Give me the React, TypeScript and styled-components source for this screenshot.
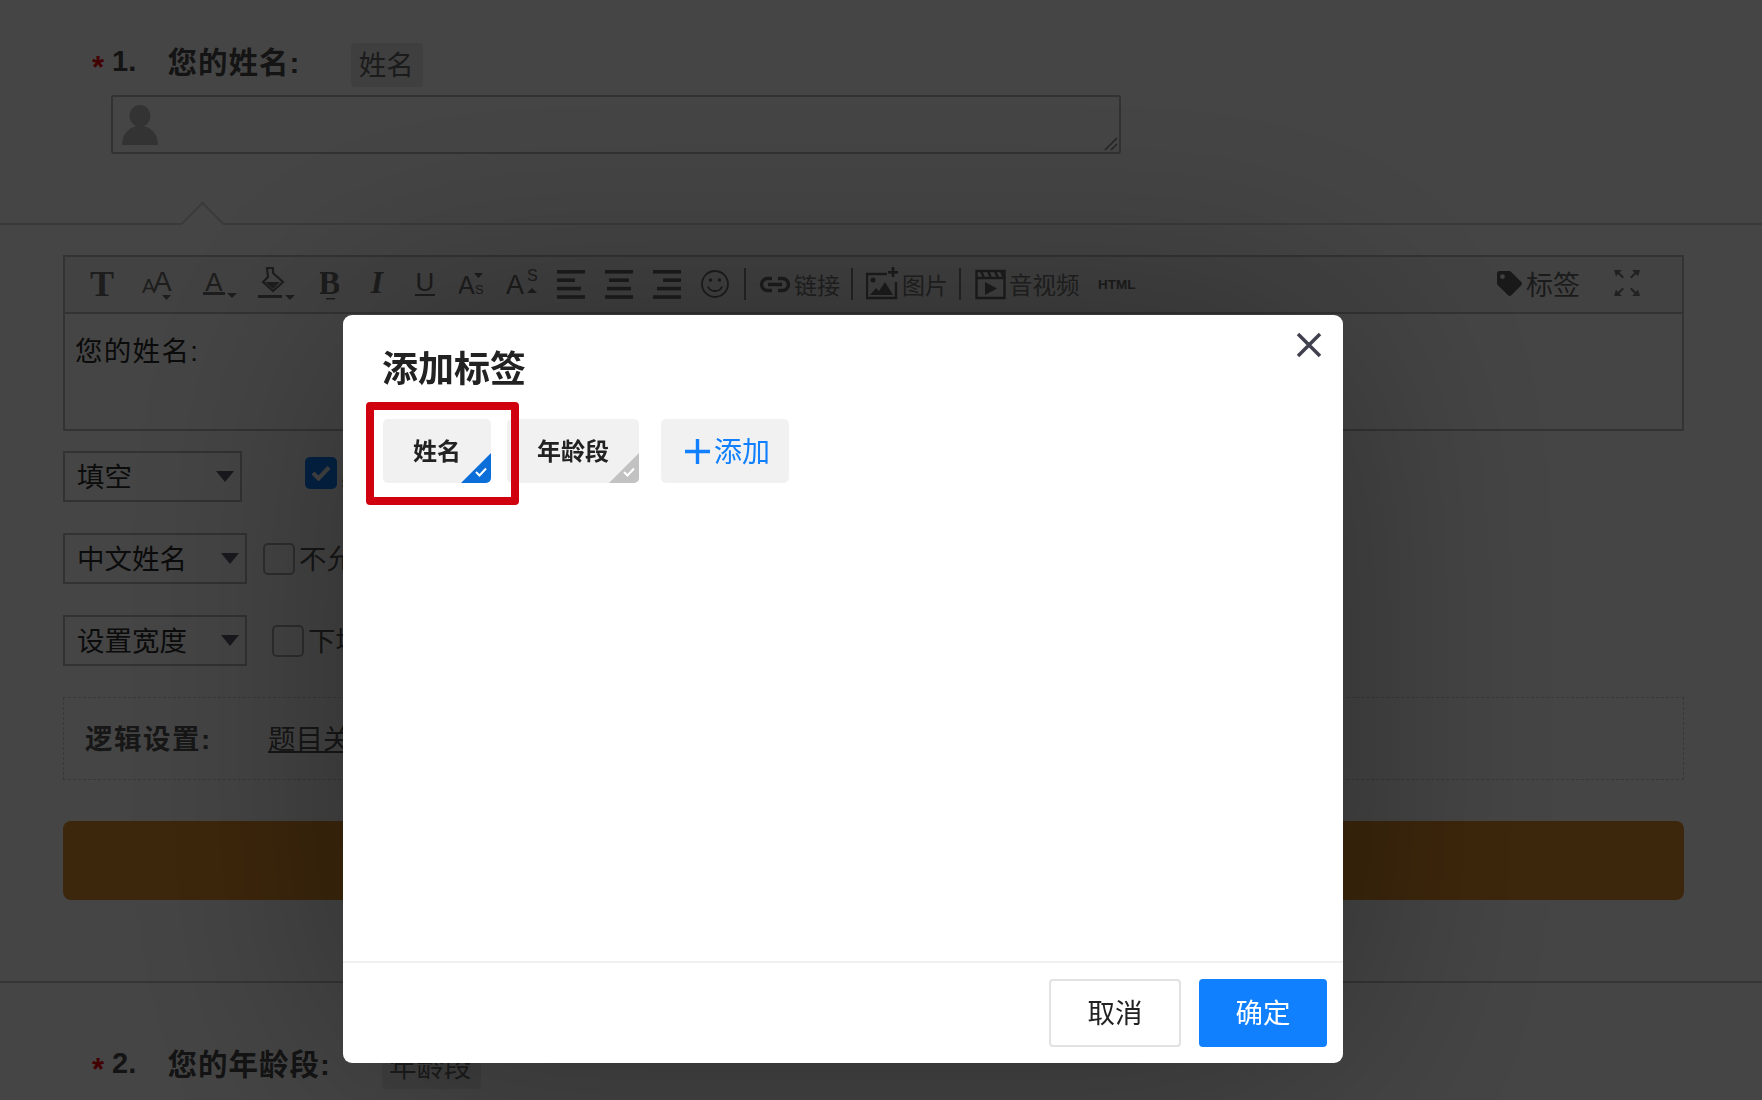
import React from "react";
import styled, { createGlobalStyle } from "styled-components";
import { FaTag } from "react-icons/fa";

const GlobalStyle = createGlobalStyle`
  html, body {
    margin: 0;
    padding: 0;
    background: #fff;
  }
  body {
    font-family: "Liberation Sans", "Noto Sans CJK SC", sans-serif;
    color: #3a3a3a;
  }
`;

const Page = styled.div`
  width: 1762px;
  height: 1100px;
  overflow: hidden;
  background: #fff;
`;

const QuestionHead = styled.div<{ $top: number }>`
  display: flex;
  align-items: center;
  height: 44px;
  padding-top: ${(p) => p.$top}px;
  padding-left: 92px;
`;

const Star = styled.span`
  width: 20px;
  margin-top: 4px;
  font-size: 31px;
  font-weight: 700;
  line-height: 1;
  color: #f5000a;
`;

const QuestionNo = styled.span`
  width: 55.5px;
  padding-bottom: 7px;
  font-size: 29px;
  font-weight: 700;
  color: #4a4a4a;
`;

const QuestionTitle = styled.span`
  padding-bottom: 10px;
  font-size: 29.5px;
  font-weight: 700;
  letter-spacing: 1px;
  color: #4a4a4a;
`;

const Chip = styled.span<{ $ml: number; $w: number }>`
  display: flex;
  align-items: center;
  justify-content: center;
  box-sizing: border-box;
  width: ${(p) => p.$w}px;
  height: 44px;
  margin-left: ${(p) => p.$ml}px;
  padding: 0 2px 5px 0;
  border-radius: 4px;
  background: #e8e8e8;
  font-size: 27.5px;
  color: #666;
`;

const NameField = styled.div`
  box-sizing: border-box;
  width: 1010px;
  height: 59px;
  margin: 8px 0 0 111px;
  padding: 8px 0 0 9px;
  border: 2px solid #b8b8b8;
  border-radius: 3px;
  position: relative;
`;

const ResizeGrip = styled.svg`
  position: absolute;
  right: 1px;
  bottom: 1px;
`;

const EditSection = styled.section`
  position: relative;
  margin-top: 69px;
  height: 726px;
  padding-top: 30px;
  border-top: 2px solid #d6d6d6;
  border-bottom: 2px solid #c4c4c4;
  box-sizing: content-box;

  &::before {
    content: "";
    position: absolute;
    left: 187px;
    top: -17px;
    width: 31px;
    height: 31px;
    background: #fff;
    border-top: 2px solid #d6d6d6;
    border-left: 2px solid #d6d6d6;
    box-sizing: border-box;
    transform: rotate(45deg);
  }
`;

const Editor = styled.div`
  margin: 0 78px 0 63px;
  border: 2px solid #bcbcbc;
`;

const Toolbar = styled.div`
  display: flex;
  align-items: center;
  box-sizing: border-box;
  height: 57px;
  padding: 0 41px 2px 24px;
  border-bottom: 2px solid #bcbcbc;
  background: #f4f4f4;
`;

const ToolSvg = styled.svg<{ $ml: number }>`
  flex: none;
  margin-left: ${(p) => p.$ml}px;
  fill: #6c6c6c;
  stroke: none;

  text {
    font-family: "Liberation Sans", sans-serif;
  }
  .serif {
    font-family: "Liberation Serif", serif;
    font-weight: 700;
  }
`;

const ToolSep = styled.span<{ $ml: number }>`
  flex: none;
  width: 2px;
  height: 32px;
  margin-left: ${(p) => p.$ml}px;
  background: #8a8a8a;
`;

const ToolLabel = styled.span<{ $ml: number; $size: number }>`
  flex: none;
  margin-left: ${(p) => p.$ml}px;
  font-size: ${(p) => p.$size}px;
  color: #7c7c7c;
`;

const TagTool = styled.span`
  display: flex;
  align-items: center;
  margin-left: auto;
  font-size: 27px;
  color: #666;

  svg {
    margin-right: 4px;
    fill: #5e5e5e;
  }
`;

const EditorBody = styled.div`
  height: 115px;
  box-sizing: border-box;
  padding: 21px 0 0 10px;
  font-size: 27.5px;
  line-height: 34px;
  letter-spacing: 1.3px;
  color: #2a2a2a;
`;

const FormRow = styled.div<{ $mt: number }>`
  display: flex;
  align-items: center;
  margin: ${(p) => p.$mt}px 0 0 63px;
`;

const SelectBox = styled.div<{ $w: number }>`
  box-sizing: border-box;
  display: flex;
  align-items: center;
  justify-content: space-between;
  width: ${(p) => p.$w}px;
  height: 51px;
  padding: 0 6px 0 12px;
  border: 2px solid #b8b8b8;
  font-size: 27.5px;
  color: #2c2c2c;

  span {
    margin-bottom: 4px;
  }
`;

const CheckBox = styled.span<{ $ml: number; $checked?: boolean }>`
  flex: none;
  box-sizing: border-box;
  display: flex;
  align-items: center;
  justify-content: center;
  width: 32px;
  height: 32px;
  margin-left: ${(p) => p.$ml}px;
  margin-top: ${(p) => (p.$checked ? -7 : 0)}px;
  border: ${(p) => (p.$checked ? "none" : "2px solid #aaa")};
  border-radius: 5px;
  background: ${(p) => (p.$checked ? "#1080ff" : "#fff")};
`;

const CheckText = styled.span`
  margin: 0 0 4px 4px;
  font-size: 27.5px;
  color: #555;
  white-space: nowrap;
`;

const LogicBox = styled.div`
  box-sizing: border-box;
  display: flex;
  align-items: center;
  height: 83px;
  margin: 31px 78px 0 63px;
  padding: 0 0 4px 21px;
  border: 1.5px dashed #d0d0d0;
  font-size: 27.5px;
  color: #555;
`;

const LogicLabel = styled.span`
  width: 183px;
  font-weight: 700;
  letter-spacing: 1.5px;
`;

const LogicLink = styled.span`
  text-decoration: underline;
`;

const SaveBar = styled.div`
  height: 79px;
  margin: 41px 78px 0 63px;
  border-radius: 8px;
  background: #e2902d;
`;

const Backdrop = styled.div`
  position: fixed;
  inset: 0;
  box-sizing: border-box;
  padding: 315px 0 0 343px;
  background: rgba(0, 0, 0, 0.73);
`;

const Modal = styled.div`
  position: relative;
  display: flex;
  flex-direction: column;
  width: 1000px;
  height: 748px;
  border-radius: 9px;
  background: #fff;
  box-shadow: 0 0 300px rgba(0, 0, 0, 0.36);
`;

const CloseBtn = styled.svg`
  position: absolute;
  top: 17px;
  right: 21px;
`;

const ModalTitle = styled.h2`
  margin: 30px 0 0 39px;
  font-size: 36px;
  font-weight: 700;
  line-height: 50px;
  color: #222;
`;

const TagList = styled.div`
  flex: 1;
  display: flex;
  align-items: flex-start;
  margin: 24px 0 0 40px;
`;

const TagItem = styled.div<{ $w: number; $ml?: number }>`
  position: relative;
  overflow: hidden;
  display: flex;
  align-items: center;
  justify-content: center;
  box-sizing: border-box;
  width: ${(p) => p.$w}px;
  height: 64px;
  margin-left: ${(p) => p.$ml || 0}px;
  padding-bottom: 4px;
  border-radius: 5px;
  background: #f1f1f1;
  font-size: 24px;
  font-weight: 700;
  color: #222;
`;

const TagCorner = styled.span<{ $active?: boolean }>`
  position: absolute;
  right: 0;
  bottom: 0;
  display: flex;
  align-items: flex-end;
  justify-content: flex-end;
  width: 30px;
  height: 30px;
  padding: 0 4px 6px 0;
  box-sizing: border-box;
  clip-path: polygon(100% 0, 100% 100%, 0 100%);
  background: ${(p) => (p.$active ? "#0c6ed8" : "#c2c2c2")};
`;

const AddTag = styled(TagItem)`
  gap: 4px;
  padding: 0 0 0 5px;
  font-size: 28px;
  font-weight: 400;
  color: #1080ff;

  svg {
    margin-top: 1px;
  }
  span {
    margin-bottom: 2px;
  }
`;

const HighlightBox = styled.div`
  position: absolute;
  left: 23px;
  top: 87px;
  box-sizing: border-box;
  width: 153px;
  height: 103px;
  border: 8px solid #d1000f;
  border-radius: 4px;
`;

const ModalFooter = styled.div`
  display: flex;
  justify-content: flex-end;
  gap: 18px;
  height: 102px;
  box-sizing: border-box;
  padding: 16px 16px 0 0;
  border-top: 2px solid #f0f0f0;
`;

const FooterBtn = styled.button<{ $primary?: boolean }>`
  box-sizing: border-box;
  width: ${(p) => (p.$primary ? 128 : 132)}px;
  height: 68px;
  padding: 0 0 5px;
  border: ${(p) => (p.$primary ? "none" : "2px solid #e2e2e2")};
  border-radius: 4px;
  background: ${(p) => (p.$primary ? "#1080ff" : "#fff")};
  font-family: inherit;
  font-size: 27.5px;
  color: ${(p) => (p.$primary ? "#fff" : "#222")};
`;

const Tool: React.FC<{ w: number; ml: number; children: React.ReactNode }> = ({ w, ml, children }) => (
  <ToolSvg $ml={ml} width={w} height={34} viewBox={`0 0 ${w} 34`}>
    {children}
  </ToolSvg>
);

const Bars: React.FC<{ widths: number[]; align: "l" | "c" | "r" }> = ({ widths, align }) => (
  <>
    {widths.map((b, i) => (
      <rect
        key={i}
        x={align === "l" ? 0 : align === "c" ? (28 - b) / 2 : 28 - b}
        y={3 + i * 8.4}
        width={b}
        height={3.6}
      />
    ))}
  </>
);

const SelectArrow = () => (
  <svg width="18" height="11" viewBox="0 0 18 11">
    <path d="M0 0h18L9 11z" fill="#5a5a6e" />
  </svg>
);

const CheckMark = () => (
  <svg width="20" height="16" viewBox="0 0 20 16">
    <path d="M2 8l5.5 5.5L18 2.5" fill="none" stroke="#fff" strokeWidth="4" />
  </svg>
);

const TagCheck = () => (
  <svg width="12" height="10" viewBox="0 0 12 10">
    <path d="M1 5l3.5 3.5L11 1.5" fill="none" stroke="#fff" strokeWidth="2" />
  </svg>
);

const EditorToolbar = () => (
  <Toolbar>
    <Tool w={26} ml={0}>
      <text className="serif" x="13" y="29" fontSize="36" textAnchor="middle">T</text>
    </Tool>
    <Tool w={32} ml={27}>
      <text x="0" y="26" fontSize="20">A</text>
      <text x="11" y="24" fontSize="28">A</text>
      <path d="M20 28h9l-4.500 5z" />
    </Tool>
    <Tool w={34} ml={29}>
      <text x="11" y="24" fontSize="26" textAnchor="middle">A</text>
      <rect x="0" y="25" width="22" height="3" />
      <path d="M24 26h10l-5 5z" />
    </Tool>
    <Tool w={37} ml={21}>
      <path d="M9 1h6v5l10 9-10 9-10-9 5-5z" fill="none" stroke="#6c6c6c" strokeWidth="2.200" />
      <path d="M7 15h15l-7 7z" />
      <rect x="0" y="28" width="24" height="3" />
      <path d="M27 28h10l-5 5z" />
    </Tool>
    <Tool w={19} ml={25}>
      <text className="serif" x="9.500" y="27" fontSize="33" textAnchor="middle">B</text>
      <rect x="6" y="31" width="9" height="1.500" />
    </Tool>
    <Tool w={20} ml={28}>
      <text className="serif" x="10" y="26" fontSize="32" fontStyle="italic" textAnchor="middle">I</text>
    </Tool>
    <Tool w={20} ml={28}>
      <text x="10" y="24" fontSize="26" textAnchor="middle">U</text>
      <rect x="0" y="27" width="20" height="2" />
    </Tool>
    <Tool w={24} ml={24}>
      <text x="-1" y="27" fontSize="25">A</text>
      <text x="16" y="27" fontSize="13">S</text>
      <path d="M15 6h9l-4.500 5z" />
    </Tool>
    <Tool w={32} ml={23}>
      <text x="0" y="27" fontSize="27">A</text>
      <text x="21" y="14" fontSize="16">S</text>
      <path d="M21 26h10l-5-5z" />
    </Tool>
    <Tool w={28} ml={19}>
      <Bars widths={[28, 18, 24, 28]} align="l" />
    </Tool>
    <Tool w={28} ml={20}>
      <Bars widths={[28, 20, 24, 28]} align="c" />
    </Tool>
    <Tool w={28} ml={20}>
      <Bars widths={[28, 18, 24, 28]} align="r" />
    </Tool>
    <Tool w={28} ml={20}>
      <circle cx="14" cy="17" r="13" fill="none" stroke="#6c6c6c" strokeWidth="1.800" />
      <circle cx="9.500" cy="13" r="1.800" />
      <circle cx="18.500" cy="13" r="1.800" />
      <path d="M7 19.500c2 6 12 6 14 0" fill="none" stroke="#6c6c6c" strokeWidth="1.800" />
    </Tool>
    <ToolSep $ml={15} />
    <Tool w={32} ml={13}>
      <path d="M13 11.500H8.500a6 6 0 0 0 0 12H13M19 11.500h4.500a6 6 0 0 1 0 12H19M9 17.500h14" fill="none" stroke="#6c6c6c" strokeWidth="3.400" />
    </Tool>
    <ToolLabel $ml={3} $size={23}>链接</ToolLabel>
    <ToolSep $ml={11} />
    <Tool w={32} ml={13}>
      <path d="M21 7H1v24h29V15" fill="none" stroke="#6c6c6c" strokeWidth="2.400" />
      <rect x="22" y="4" width="10" height="2.600" />
      <rect x="25.700" y="0" width="2.600" height="10" />
      <circle cx="7" cy="13" r="2.500" />
      <path d="M4 28l6-7 3 3 6-9 8 13z" />
    </Tool>
    <ToolLabel $ml={4} $size={23}>图片</ToolLabel>
    <ToolSep $ml={11} />
    <Tool w={31} ml={14}>
      <path d="M1.500 4h28v27h-28zM1.500 11h28" fill="none" stroke="#6c6c6c" strokeWidth="2.400" />
      <path d="M6 4l3 7M13 4l3 7M20 4l3 7M26 4l2.500 6" fill="none" stroke="#6c6c6c" strokeWidth="2.400" />
      <path d="M10 15l12 6.500L10 28z" />
    </Tool>
    <ToolLabel $ml={3} $size={23.5}>音视频</ToolLabel>
    <Tool w={38} ml={18}>
      <text x="0" y="22" fontSize="13.500" fontWeight="700">HTML</text>
    </Tool>
    <TagTool>
      <FaTag size={25} />
      标签
    </TagTool>
    <Tool w={28} ml={33}>
      <path d="M1 3h8L6.500 5.500l4.500 4.500-1.500 1.500L5 7 3 9.500zM27 3h-8l2.500 2.500L17 10l1.500 1.500L23 7l2 2.500zM1 29h8l-2.500-2.500L11 22l-1.500-1.500L5 25l-2-2.500zM27 29h-8l2.500-2.500L17 22l1.500-1.500L23 25l2-2.500z" fill="#7c7c7c" />
    </Tool>
  </Toolbar>
);

const App: React.FC = () => (
  <Page>
    <GlobalStyle />
    <QuestionHead $top={43}>
      <Star>*</Star>
      <QuestionNo>1.</QuestionNo>
      <QuestionTitle>您的姓名:</QuestionTitle>
      <Chip $ml={51} $w={72}>姓名</Chip>
    </QuestionHead>
    <NameField>
      <svg width="36" height="40" viewBox="0 0 36 40">
        <ellipse cx="18" cy="11" rx="10.500" ry="11" fill="#bcbcbc" />
        <path d="M0 40c0-12 8-19 18-19s18 7 18 19z" fill="#bcbcbc" />
      </svg>
      <ResizeGrip width="14" height="14" viewBox="0 0 14 14">
        <path d="M1 13L13 1M7 13l6-6" stroke="#8a8a8a" strokeWidth="1.600" />
      </ResizeGrip>
    </NameField>

    <EditSection>
      <Editor>
        <EditorToolbar />
        <EditorBody>您的姓名:</EditorBody>
      </Editor>
      <FormRow $mt={20}>
        <SelectBox $w={179}>
          <span>填空</span>
          <SelectArrow />
        </SelectBox>
        <CheckBox $ml={63} $checked>
          <CheckMark />
        </CheckBox>
        <CheckText>必填</CheckText>
      </FormRow>
      <FormRow $mt={31}>
        <SelectBox $w={184}>
          <span>中文姓名</span>
          <SelectArrow />
        </SelectBox>
        <CheckBox $ml={16} />
        <CheckText>不允许重复</CheckText>
      </FormRow>
      <FormRow $mt={31}>
        <SelectBox $w={184}>
          <span>设置宽度</span>
          <SelectArrow />
        </SelectBox>
        <CheckBox $ml={25} />
        <CheckText>下填写</CheckText>
      </FormRow>
      <LogicBox>
        <LogicLabel>逻辑设置:</LogicLabel>
        <LogicLink>题目关联</LogicLink>
      </LogicBox>
      <SaveBar />
    </EditSection>

    <QuestionHead $top={62}>
      <Star>*</Star>
      <QuestionNo>2.</QuestionNo>
      <QuestionTitle>您的年龄段:</QuestionTitle>
      <Chip $ml={51} $w={99}>年龄段</Chip>
    </QuestionHead>

    <Backdrop>
      <Modal>
        <CloseBtn width="26" height="26" viewBox="0 0 26 26">
          <path d="M2 2l22 22M24 2L2 24" stroke="#40404e" strokeWidth="3.500" />
        </CloseBtn>
        <ModalTitle>添加标签</ModalTitle>
        <TagList>
          <TagItem $w={108}>
            姓名
            <TagCorner $active>
              <TagCheck />
            </TagCorner>
          </TagItem>
          <TagItem $w={132} $ml={16}>
            年龄段
            <TagCorner>
              <TagCheck />
            </TagCorner>
          </TagItem>
          <AddTag $w={128} $ml={22}>
            <svg width="25" height="25" viewBox="0 0 25 25">
              <path d="M0 12.500h25M12.500 0v25" stroke="#1080ff" strokeWidth="3.400" />
            </svg>
            <span>添加</span>
          </AddTag>
        </TagList>
        <HighlightBox />
        <ModalFooter>
          <FooterBtn>取消</FooterBtn>
          <FooterBtn $primary>确定</FooterBtn>
        </ModalFooter>
      </Modal>
    </Backdrop>
  </Page>
);

export default App;
